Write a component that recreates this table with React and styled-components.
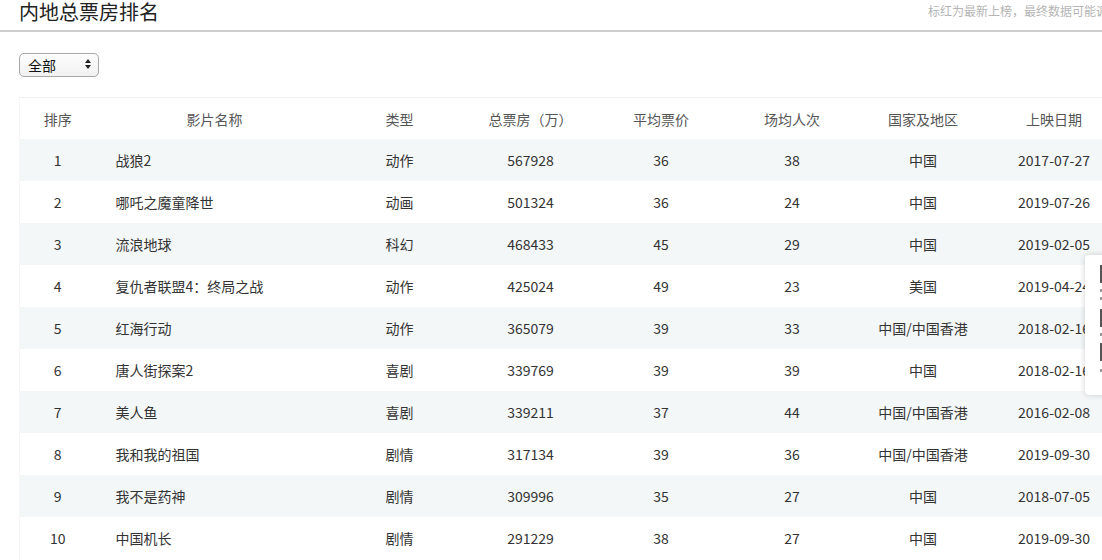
import React from 'react';
import styled, { createGlobalStyle } from 'styled-components';

const GlobalStyle = createGlobalStyle`
  html, body {
    margin: 0;
    padding: 0;
    overflow: hidden;
    background: #fff;
  }
  body {
    font-family: 'Noto Sans CJK SC', 'Noto Sans', sans-serif;
    color: #333;
  }
`;

const Page = styled.div`
  position: relative;
  width: 1200px;
`;

const Header = styled.div`
  display: grid;
  grid-template-columns: 909px auto;
  align-items: start;
  height: 30px;
  padding-left: 19px;
  border-bottom: 2px solid #cfcfd2;
`;

const Title = styled.h1`
  margin: 0;
  font-size: 20px;
  font-weight: 400;
  line-height: 24px;
  color: #222;
`;

const Note = styled.span`
  margin-top: 3px;
  font-size: 12px;
  line-height: 16px;
  color: #b4b4b4;
  white-space: nowrap;
`;

const Content = styled.div`
  padding: 20px 0 0 19px;
`;

const SelectWrap = styled.div`
  position: relative;
  width: 80px;
  height: 24px;
`;

const Select = styled.select`
  appearance: none;
  width: 80px;
  height: 24px;
  padding: 0 0 0 8px;
  border: 1px solid #a8a8a8;
  border-radius: 5px;
  background: linear-gradient(#fdfdfd, #f1f1f1);
  font-family: inherit;
  font-size: 14px;
  color: #111;
  outline: none;
`;

const Arrows = styled.svg`
  position: absolute;
  right: 8px;
  top: 7px;
  pointer-events: none;
`;

const Table = styled.table`
  margin-top: 21px;
  border-collapse: collapse;
  table-layout: fixed;
  width: 1100px;
  border-top: 1px solid #f0f0f0;
  border-left: 1px solid #f6f6f6;
  font-size: 14px;
`;

const Th = styled.th`
  height: 41px;
  font-weight: 400;
  color: #555;
  text-align: center;
  padding: 0;
`;

const Row = styled.tr`
  background: ${(p) => (p.$striped ? '#f4f7f8' : '#fff')};
`;

const Td = styled.td`
  height: 42px;
  padding: ${(p) => (p.$left ? '0 0 0 20px' : '0')};
  text-align: ${(p) => (p.$left ? 'left' : 'center')};
  color: #333;
  white-space: nowrap;
`;

const SidePanel = styled.div`
  position: absolute;
  left: 1085px;
  top: 255px;
  width: 60px;
  height: 140px;
  background: #fff;
  box-shadow: 0 0 6px rgba(0, 0, 0, 0.18);
  border-radius: 4px 0 0 4px;
  display: flex;
  flex-direction: column;
  padding: 10px 0 0 14px;
  box-sizing: border-box;
`;

const columns = [
  { key: 'rank', label: '排序', width: 76 },
  { key: 'name', label: '影片名称', width: 238 },
  { key: 'type', label: '类型', width: 132 },
  { key: 'total', label: '总票房（万）', width: 130 },
  { key: 'avg', label: '平均票价', width: 131 },
  { key: 'people', label: '场均人次', width: 131 },
  { key: 'region', label: '国家及地区', width: 131 },
  { key: 'date', label: '上映日期', width: 131 },
];

const movies = [
  [1, '战狼2', '动作', 567928, 36, 38, '中国', '2017-07-27'],
  [2, '哪吒之魔童降世', '动画', 501324, 36, 24, '中国', '2019-07-26'],
  [3, '流浪地球', '科幻', 468433, 45, 29, '中国', '2019-02-05'],
  [4, '复仇者联盟4：终局之战', '动作', 425024, 49, 23, '美国', '2019-04-24'],
  [5, '红海行动', '动作', 365079, 39, 33, '中国/中国香港', '2018-02-16'],
  [6, '唐人街探案2', '喜剧', 339769, 39, 39, '中国', '2018-02-16'],
  [7, '美人鱼', '喜剧', 339211, 37, 44, '中国/中国香港', '2016-02-08'],
  [8, '我和我的祖国', '剧情', 317134, 39, 36, '中国/中国香港', '2019-09-30'],
  [9, '我不是药神', '剧情', 309996, 35, 27, '中国', '2018-07-05'],
  [10, '中国机长', '剧情', 291229, 38, 27, '中国', '2019-09-30'],
];

const PanelIcons = () => (
  <svg width="40" height="120" viewBox="0 0 40 120">
    <rect x="1" y="0" width="2" height="18" fill="#555" />
    <rect x="1" y="24" width="2" height="3" fill="#999" />
    <rect x="1" y="32" width="2" height="3" fill="#999" />
    <rect x="1" y="44" width="2" height="18" fill="#555" />
    <rect x="1" y="68" width="2" height="3" fill="#999" />
    <rect x="1" y="78" width="2" height="18" fill="#555" />
    <rect x="1" y="104" width="2" height="3" fill="#999" />
  </svg>
);

const App = () => (
  <Page>
    <GlobalStyle />
    <Header>
      <Title>内地总票房排名</Title>
      <Note>标红为最新上榜，最终数据可能调整，仅供参考</Note>
    </Header>
    <Content>
      <SelectWrap>
        <Select defaultValue="all">
          <option value="all">全部</option>
          <option value="action">动作</option>
          <option value="comedy">喜剧</option>
        </Select>
        <Arrows width="6" height="10" viewBox="0 0 6 10">
          <path d="M3 0 L6 4 L0 4 Z" fill="#222" />
          <path d="M3 10 L6 6 L0 6 Z" fill="#222" />
        </Arrows>
      </SelectWrap>
      <Table>
        <colgroup>
          {columns.map((c) => (
            <col key={c.key} style={{ width: c.width }} />
          ))}
        </colgroup>
        <thead>
          <tr>
            {columns.map((c) => (
              <Th key={c.key}>{c.label}</Th>
            ))}
          </tr>
        </thead>
        <tbody>
          {movies.map((m, i) => (
            <Row key={m[0]} $striped={i % 2 === 0}>
              {m.map((v, j) => (
                <Td key={j} $left={j === 1}>
                  {v}
                </Td>
              ))}
            </Row>
          ))}
        </tbody>
      </Table>
    </Content>
    <SidePanel>
      <PanelIcons />
    </SidePanel>
  </Page>
);

export default App;
